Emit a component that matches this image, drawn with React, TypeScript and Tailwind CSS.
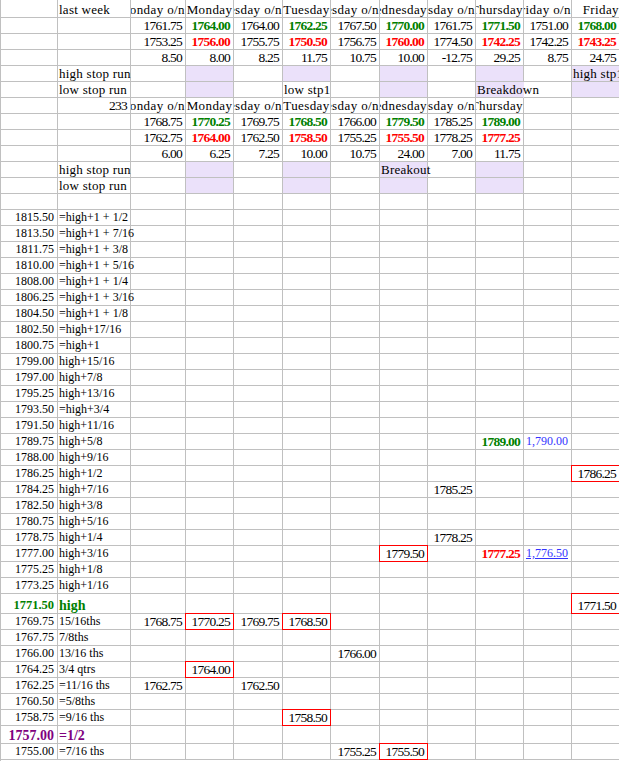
import React from "react";

type Variant =
  | "lbl"
  | "hdrR"
  | "hdrC"
  | "num"
  | "g"
  | "r"
  | "p"
  | "pl"
  | "gp"
  | "gl"
  | "pp"
  | "ppl"
  | "b"
  | "bu";

type CellDef = {
  t?: string;
  v?: Variant;
  bg?: boolean;
  box?: boolean;
  open?: boolean;
} | null;

const V: Record<Variant, string> = {
  lbl: "justify-start pl-px whitespace-nowrap text-[13px] tracking-[0.25px]",
  hdrR: "justify-end overflow-hidden whitespace-nowrap text-[13px] tracking-[0.4px]",
  hdrC: "justify-center overflow-hidden whitespace-nowrap text-[13px] tracking-[0.4px]",
  num: "justify-end pr-[3px] whitespace-nowrap text-[13.5px] tracking-[-0.75px]",
  g: "justify-end pr-[3px] whitespace-nowrap text-[13.5px] tracking-[-0.75px] font-bold text-[#008000]",
  r: "justify-end pr-[3px] whitespace-nowrap text-[13.5px] tracking-[-0.75px] font-bold text-[#ff0000]",
  p: "justify-end pr-[3px] whitespace-nowrap text-[12px]",
  pl: "justify-start pl-px whitespace-nowrap text-[12px]",
  gp: "justify-end pr-[3px] whitespace-nowrap text-[12.5px] font-bold text-[#008000]",
  gl: "justify-start pl-px whitespace-nowrap text-[14px] font-bold text-[#008000]",
  pp: "justify-end pr-[3px] whitespace-nowrap text-[14px] font-bold text-[#800080]",
  ppl: "justify-start pl-px whitespace-nowrap text-[14px] font-bold text-[#800080]",
  b: "justify-end pr-[3px] whitespace-nowrap text-[12px] text-[#3333ff]",
  bu: "justify-end pr-[3px] whitespace-nowrap text-[12px] text-[#3333ff] underline",
};

const E: CellDef = null;
const n = (t: string): CellDef => ({ t, v: "num" });
const g = (t: string): CellDef => ({ t, v: "g" });
const r = (t: string): CellDef => ({ t, v: "r" });
const L = (t: string): CellDef => ({ t, v: "lbl" });
const HR = (t: string): CellDef => ({ t, v: "hdrR" });
const HC = (t: string): CellDef => ({ t, v: "hdrC" });
const BG: CellDef = { bg: true };
const bx = (t: string): CellDef => ({ t, v: "num", box: true });

type RowDef = { h: string; cells: CellDef[] };

const headerRow = (withFri: boolean, first: CellDef): CellDef[] => [
  E,
  first,
  HR("Monday o/n"),
  HC("Monday"),
  HR("Tuesday o/n"),
  HC("Tuesday"),
  HR("Wednesday o/n"),
  HR("Wednesday"),
  HR("Thursday o/n"),
  HR("Thursday"),
  withFri ? HR("Friday o/n") : E,
  withFri ? HR("Friday") : E,
];

const topRows: RowDef[] = [
  { h: "h-[18px]", cells: headerRow(true, L("last week")) },
  {
    h: "h-[16px]",
    cells: [E, E, n("1761.75"), g("1764.00"), n("1764.00"), g("1762.25"), n("1767.50"), g("1770.00"), n("1761.75"), g("1771.50"), n("1751.00"), g("1768.00")],
  },
  {
    h: "h-[16px]",
    cells: [E, E, n("1753.25"), r("1756.00"), n("1755.75"), r("1750.50"), n("1756.75"), r("1760.00"), n("1774.50"), r("1742.25"), n("1742.25"), r("1743.25")],
  },
  {
    h: "h-[16px]",
    cells: [E, E, n("8.50"), n("8.00"), n("8.25"), n("11.75"), n("10.75"), n("10.00"), n("-12.75"), n("29.25"), n("8.75"), n("24.75")],
  },
  {
    h: "h-[16px]",
    cells: [E, L("high stop run"), E, BG, E, BG, E, BG, E, BG, E, { t: "high stp1", v: "lbl", bg: true }],
  },
  {
    h: "h-[16px]",
    cells: [E, L("low stop run"), E, BG, E, L("low stp1"), E, BG, E, { t: "Breakdown", v: "lbl", bg: true, open: true }, E, BG],
  },
  { h: "h-[16px]", cells: headerRow(false, n("233")) },
  {
    h: "h-[16px]",
    cells: [E, E, n("1768.75"), g("1770.25"), n("1769.75"), g("1768.50"), n("1766.00"), g("1779.50"), n("1785.25"), g("1789.00"), E, E],
  },
  {
    h: "h-[16px]",
    cells: [E, E, n("1762.75"), r("1764.00"), n("1762.50"), r("1758.50"), n("1755.25"), r("1755.50"), n("1778.25"), r("1777.25"), E, E],
  },
  {
    h: "h-[16px]",
    cells: [E, E, n("6.00"), n("6.25"), n("7.25"), n("10.00"), n("10.75"), n("24.00"), n("7.00"), n("11.75"), E, E],
  },
  {
    h: "h-[16px]",
    cells: [E, L("high stop run"), E, BG, E, BG, E, { t: "Breakout", v: "lbl", bg: true }, E, BG, E, E],
  },
  {
    h: "h-[16px]",
    cells: [E, L("low stop run"), E, BG, E, BG, E, BG, E, BG, E, E],
  },
  { h: "h-[16px]", cells: [E, E, E, E, E, E, E, E, E, E, E, E] },
];

const prices: [string, string][] = [
  ["1815.50", "=high+1 + 1/2"],
  ["1813.50", "=high+1 + 7/16"],
  ["1811.75", "=high+1 + 3/8"],
  ["1810.00", "=high+1 + 5/16"],
  ["1808.00", "=high+1 + 1/4"],
  ["1806.25", "=high+1 + 3/16"],
  ["1804.50", "=high+1 + 1/8"],
  ["1802.50", "=high+17/16"],
  ["1800.75", "=high+1"],
  ["1799.00", "high+15/16"],
  ["1797.00", "high+7/8"],
  ["1795.25", "high+13/16"],
  ["1793.50", "=high+3/4"],
  ["1791.50", "high+11/16"],
  ["1789.75", "high+5/8"],
  ["1788.00", "high+9/16"],
  ["1786.25", "high+1/2"],
  ["1784.25", "high+7/16"],
  ["1782.50", "high+3/8"],
  ["1780.75", "high+5/16"],
  ["1778.75", "high+1/4"],
  ["1777.00", "high+3/16"],
  ["1775.25", "high+1/8"],
  ["1773.25", "high+1/16"],
  ["1771.50", "high"],
  ["1769.75", "15/16ths"],
  ["1767.75", "7/8ths"],
  ["1766.00", "13/16 ths"],
  ["1764.25", "3/4 qtrs"],
  ["1762.25", "=11/16 ths"],
  ["1760.50", "=5/8ths"],
  ["1758.75", "=9/16 ths"],
  ["1757.00", "=1/2"],
  ["1755.00", "=7/16 ths"],
];

const extras: Record<string, Record<number, CellDef>> = {
  "1789.75": { 9: g("1789.00"), 10: { t: "1,790.00", v: "b" } },
  "1786.25": { 11: bx("1786.25") },
  "1784.25": { 8: n("1785.25") },
  "1778.75": { 8: n("1778.25") },
  "1777.00": { 7: bx("1779.50"), 9: r("1777.25"), 10: { t: "1,776.50", v: "bu" } },
  "1771.50": { 11: bx("1771.50") },
  "1769.75": { 2: n("1768.75"), 3: bx("1770.25"), 4: n("1769.75"), 5: bx("1768.50") },
  "1766.00": { 6: n("1766.00") },
  "1764.25": { 3: bx("1764.00") },
  "1762.25": { 2: n("1762.75"), 4: n("1762.50") },
  "1758.75": { 5: bx("1758.50") },
  "1755.00": { 6: n("1755.25"), 7: bx("1755.50") },
};

const lowerRows: RowDef[] = prices.map(([p, label]) => {
  let h = "h-[16px]";
  let first: CellDef = { t: p, v: "p" };
  let second: CellDef = { t: label, v: "pl" };
  if (p === "1771.50") {
    h = "h-[20px]";
    first = { t: p, v: "gp" };
    second = { t: label, v: "gl" };
  } else if (p === "1757.00") {
    h = "h-[18px]";
    first = { t: p, v: "pp" };
    second = { t: label, v: "ppl" };
  }
  const cells: CellDef[] = [first, second];
  const ex = extras[p] || {};
  for (let i = 2; i < 12; i++) cells.push(ex[i] ?? E);
  return { h, cells };
});

function Cell({ c }: { c: CellDef }) {
  let borders = "border-b border-r border-[#c0c0c0]";
  if (c?.open) borders = "border-b border-r border-b-[#c0c0c0] border-r-transparent";
  if (c?.box) borders = "z-10 -ml-px -mt-px bg-white shadow-[inset_0_0_0_1px_#ff0000]";
  const bg = c?.bg ? "bg-[#ebe1fa]" : "";
  const variant = c?.v ? V[c.v] : "";
  return (
    <div className={`relative flex items-end leading-[15px] min-w-0 ${borders} ${bg} ${variant}`}>
      {c?.t ? <span className={c?.box ? "pb-px pr-px" : ""}>{c.t}</span> : null}
    </div>
  );
}

function Row({ row }: { row: RowDef }) {
  return (
    <div
      className={`grid grid-cols-[57px_73px_55px_48px_49px_48px_49px_48px_48px_48px_48px_48px] ${row.h}`}
    >
      {row.cells.map((c, i) => (
        <Cell key={i} c={c} />
      ))}
    </div>
  );
}

export default function App() {
  const rows = [...topRows, ...lowerRows];
  return (
    <div className="h-[761px] w-[619px] overflow-hidden border-l border-[#c0c0c0] bg-white font-['Liberation_Serif',serif] text-black">
      {rows.map((row, i) => (
        <Row key={i} row={row} />
      ))}
    </div>
  );
}
